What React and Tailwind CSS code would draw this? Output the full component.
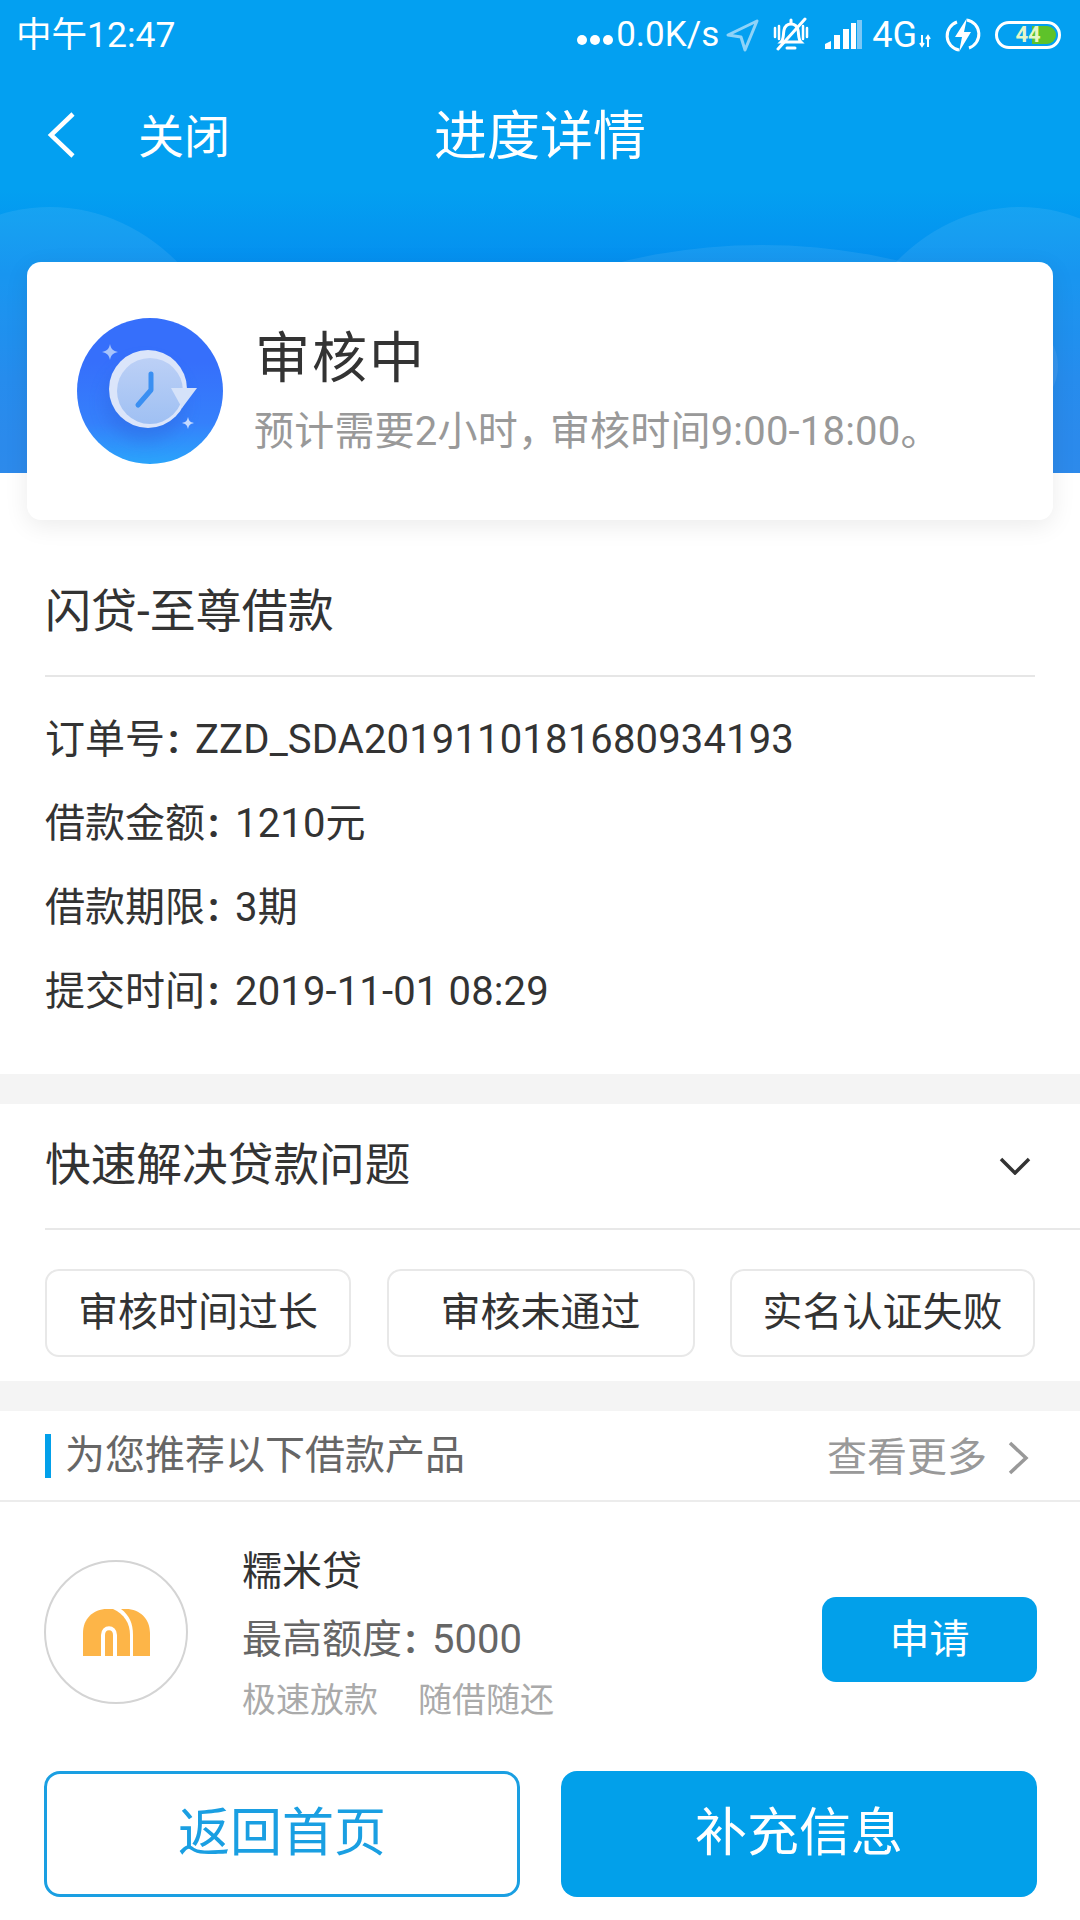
const sans = "[font-family:Roboto,'Noto_Sans_CJK_SC',sans-serif]";

function StatusBar() {
  return (
    <div className="relative flex h-[70px] items-center justify-between pl-[16px] pr-[19px] text-white">
      <span className="text-[35.5px] leading-[40px]">中午12:47</span>
      <div className="flex items-center">
        {/* overflow dots */}
        <svg width="36" height="12" viewBox="0 0 36 12" className="mt-[10px] mr-[3px]" fill="#fff">
          <circle cx="5" cy="6" r="5" />
          <circle cx="18" cy="6" r="5" />
          <circle cx="31" cy="6" r="5" />
        </svg>
        <span className="text-[35px] leading-[40px]">0.0K/s</span>
        {/* location arrow */}
        <svg width="36" height="34" viewBox="0 0 36 34" className="ml-[6px]" fill="none" stroke="#8fd3f8" strokeWidth="3" strokeLinejoin="round">
          <path d="M32 3 3 17l13 2 4 13z" />
        </svg>
        {/* muted bell */}
        <svg width="38" height="36" viewBox="0 0 38 36" className="ml-[11px]" fill="none" stroke="#fff" strokeWidth="3" strokeLinecap="round">
          <path d="M9 25c3-3 2-7 3-12 1-4 4-6 7-6s6 2 7 6c1 5 0 9 3 12z" />
          <path d="M15 31h8" />
          <path d="M19 3v3" />
          <path d="M3 11v9M35 11v9M7 9v13M31 9v13" strokeWidth="2.5" />
          <path d="M33 2 6 32" />
        </svg>
        {/* signal */}
        <svg width="38" height="30" viewBox="0 0 38 30" className="ml-[14px]">
          <path d="M1 29v-5l6-3v8z" fill="#fff" />
          <rect x="10" y="15" width="6" height="14" fill="#fff" />
          <rect x="19" y="9" width="6" height="20" fill="#fff" />
          <rect x="27" y="3" width="5" height="26" fill="#fff" />
          <rect x="33" y="0" width="5" height="29" fill="#7cc8f6" />
        </svg>
        <span className="ml-[10px] text-[36px] leading-[40px]">4G</span>
        {/* data arrows */}
        <svg width="12" height="14" viewBox="0 0 12 14" className="mt-[12px] ml-[2px]" fill="none" stroke="#fff" strokeWidth="2">
          <path d="M3 1v11M1 9l2 3 2-3M9 13V2M7 5l2-3 2 3" />
        </svg>
        {/* charging */}
        <svg width="36" height="36" viewBox="0 0 36 36" className="ml-[14px]" fill="none">
          <path d="M12 5a14.5 14.5 0 0 0 2 28M24 31a14.5 14.5 0 0 0-2-28" stroke="#fff" strokeWidth="3" />
          <path d="M22 1 10 20h7l-3 15 12-20h-7z" fill="#fff" />
        </svg>
        {/* battery */}
        <div className="relative ml-[14px] flex h-[28px] w-[66px] items-center justify-center overflow-hidden rounded-full border-[3px] border-white">
          <div className="absolute top-[2px] right-[2px] bottom-[2px] w-[24px] rounded-r-full bg-[#5ec22a]" />
          <span className="relative text-[22px] font-bold leading-[22px] text-[#e4f7c8]">44</span>
        </div>
      </div>
    </div>
  );
}

function NavBar() {
  return (
    <div className="relative flex h-[134px] items-center">
      <svg width="30" height="46" viewBox="0 0 30 46" className="-mt-[4px] ml-[47px]" fill="none" stroke="#fff" strokeWidth="4.5">
        <path d="M26 2 4 23l22 21" />
      </svg>
      <span className="ml-[61px] text-[46px] leading-[54px] text-white">关闭</span>
      <span className="ml-[204px] text-[53px] leading-[60px] text-white">进度详情</span>
    </div>
  );
}

function ClockBadge() {
  return (
    <svg width="146" height="146" viewBox="0 0 146 146" className="shrink-0">
      <defs>
        <linearGradient id="badge" x1="0.5" y1="0.3" x2="0.5" y2="1">
          <stop offset="0" stopColor="#366ffb" />
          <stop offset="0.6" stopColor="#3580fb" />
          <stop offset="1" stopColor="#2aa4fb" />
        </linearGradient>
        <linearGradient id="face" x1="0.5" y1="0" x2="0.5" y2="1">
          <stop offset="0" stopColor="#bcd0f6" />
          <stop offset="1" stopColor="#9fc0f3" />
        </linearGradient>
        <filter id="soft" x="-30%" y="-30%" width="160%" height="160%">
          <feGaussianBlur stdDeviation="8" />
        </filter>
      </defs>
      <circle cx="73" cy="73" r="73" fill="url(#badge)" />
      <circle cx="68" cy="84" r="40" fill="#2a5fd8" opacity="0.35" filter="url(#soft)" />
      <circle cx="71" cy="71" r="39" fill="#dbe5fa" />
      <circle cx="73" cy="73" r="33" fill="url(#face)" />
      <path d="M94 70h26l-15 20z" fill="#d5e2f9" />
      <path d="M74 56v16L61 87" fill="none" stroke="#3a8ff2" strokeWidth="5" strokeLinecap="round" strokeLinejoin="round" />
      <path d="M33 26c1 5 3 7 8 8-5 1-7 3-8 8-1-5-3-7-8-8 5-1 7-3 8-8z" fill="#a8c4fb" />
      <path d="M111 99c1 4 2 5 6 6-4 1-5 2-6 6-1-4-2-5-6-6 4-1 5-2 6-6z" fill="#c5daff" />
    </svg>
  );
}

function InfoRow({ label, value }) {
  return (
    <div className="flex h-[84px] items-center text-[40px] leading-[48px] text-[#333]">
      <span>{label}</span>
      <span className="w-[30px] pl-[3px] font-bold">:</span>
      <span className="tracking-[0.15px]">{value}</span>
    </div>
  );
}

function Chip({ children, className }) {
  return (
    <div className={`flex h-[88px] items-center justify-center rounded-[14px] border-2 border-[#e8e8e8] text-[40px] leading-[48px] text-[#333] ${className}`}>
      {children}
    </div>
  );
}

function ProductLogo() {
  return (
    <div className="flex h-[144px] w-[144px] shrink-0 items-center justify-center rounded-full border-2 border-[#d4d4d4]">
      <svg width="67" height="47" viewBox="0 0 67 47" fill="#fdb548">
        <path d="M0 47V24C0 10 10 0 24 0h6c11 5 17 14 17 26v21z" />
        <path d="M38 0h5c14 0 24 10 24 24v23H50V26C50 14 46 6 38 0z" />
        <path d="M20 47V26c0-9 12-9 12 0v21" fill="none" stroke="#fff" strokeWidth="4" />
      </svg>
    </div>
  );
}

export default function App() {
  return (
    <div className={`h-[1920px] w-[1080px] overflow-hidden bg-white ${sans}`}>
      {/* Hero */}
      <div className="relative h-[473px] bg-[linear-gradient(180deg,#03a0f1_0%,#03a0f1_40%,#058def_58%,#1483ec_80%,#1c80ea_100%)]">
        <svg width="1080" height="473" viewBox="0 0 1080 473" className="absolute inset-0" fill="#fff" fillOpacity="0.08">
          <ellipse cx="50" cy="420" rx="190" ry="213" />
          <ellipse cx="762" cy="370" rx="280" ry="125" />
          <ellipse cx="1020" cy="420" rx="185" ry="213" />
          <circle cx="1010" cy="366" r="48" />
        </svg>
        <StatusBar />
        <NavBar />
      </div>

      {/* Status card */}
      <div className="relative mx-[27px] -mt-[211px] flex h-[258px] items-center rounded-[14px] bg-white pl-[50px] shadow-[0_6px_24px_rgba(0,0,0,0.08)]">
        <ClockBadge />
        <div className="ml-[32px] -mt-[2px] flex flex-col">
          <span className="text-[55px] leading-[64px] tracking-[2px] text-[#333]">审核中</span>
          <span className="-ml-[1px] mt-[19px] text-[40px] leading-[46px] tracking-[0.2px] text-[#999]">
            预计需要2小时<span className="tracking-[-8px]">，</span>审核时间9:00-18:00。
          </span>
        </div>
      </div>

      {/* Order info */}
      <div className="mx-[45px] mt-[26px] flex h-[131px] items-center border-b-2 border-[#e6e6e6] text-[46px] leading-[54px] text-[#333]">
        闪贷-至尊借款
      </div>
      <div className="mx-[45px] mt-[21px] flex flex-col">
        <InfoRow label="订单号" value="ZZD_SDA2019110181680934193" />
        <InfoRow label="借款金额" value="1210元" />
        <InfoRow label="借款期限" value="3期" />
        <InfoRow label="提交时间" value="2019-11-01 08:29" />
      </div>
      <div className="mt-[40px] h-[30px] bg-[#f4f4f4]" />

      {/* Quick help */}
      <div className="ml-[45px] flex h-[126px] items-center justify-between border-b-2 border-[#e8e8e8] pr-[49px]">
        <span className="text-[45.7px] leading-[54px] text-[#333]">快速解决贷款问题</span>
        <svg width="32" height="18" viewBox="0 0 32 18" fill="none" stroke="#333" strokeWidth="3.5">
          <path d="M2 2 16 16 30 2" />
        </svg>
      </div>
      <div className="mx-[45px] mt-[39px] flex justify-between">
        <Chip className="w-[306px]">审核时间过长</Chip>
        <Chip className="w-[308px]">审核未通过</Chip>
        <Chip className="w-[305px]">实名认证失败</Chip>
      </div>
      <div className="mt-[24px] h-[30px] bg-[#f4f4f4]" />

      {/* Recommendations */}
      <div className="flex h-[91px] items-center justify-between border-b-2 border-[#ececec] pl-[45px] pr-[51px]">
        <div className="flex items-center">
          <div className="h-[44px] w-[6px] bg-[#02a0ea]" />
          <span className="ml-[14px] text-[40px] leading-[48px] text-[#666]">为您推荐以下借款产品</span>
        </div>
        <div className="mt-[4px] flex items-center">
          <span className="text-[40px] leading-[48px] text-[#999]">查看更多</span>
          <svg width="22" height="34" viewBox="0 0 22 34" className="ml-[20px]" fill="none" stroke="#999" strokeWidth="3.5">
            <path d="M3 2 19 17 3 32" />
          </svg>
        </div>
      </div>

      <div className="mx-[43px] mt-[46px] flex items-start justify-between">
        <div className="flex items-start">
          <div className="mt-[12px] ml-[1px]">
            <ProductLogo />
          </div>
          <div className="ml-[54px] flex flex-col">
            <span className="text-[40px] leading-[48px] text-[#333]">糯米贷</span>
            <div className="mt-[20px] flex text-[40px] leading-[48px] text-[#666]">
              <span>最高额度</span>
              <span className="w-[30px] pl-[3px] font-bold">:</span>
              <span>5000</span>
            </div>
            <div className="mt-[14px] flex text-[34px] leading-[44px] text-[#aaa]">
              <span>极速放款</span>
              <span className="ml-[40px]">随借随还</span>
            </div>
          </div>
        </div>
        <div className="mt-[49px] flex h-[85px] w-[215px] items-center justify-center rounded-[14px] bg-[#02a0ea] text-[40px] leading-[48px] text-white">
          申请
        </div>
      </div>

      {/* Bottom actions */}
      <div className="mx-[43px] mt-[49px] flex justify-between">
        <div className="ml-[1px] flex h-[126px] w-[476px] items-center justify-center rounded-[16px] border-[3px] border-[#1a9fe2] text-[52px] leading-[60px] text-[#1a9fe2]">
          返回首页
        </div>
        <div className="flex h-[126px] w-[476px] items-center justify-center rounded-[16px] bg-[#02a0ea] text-[52px] leading-[60px] text-white">
          补充信息
        </div>
      </div>
    </div>
  );
}
